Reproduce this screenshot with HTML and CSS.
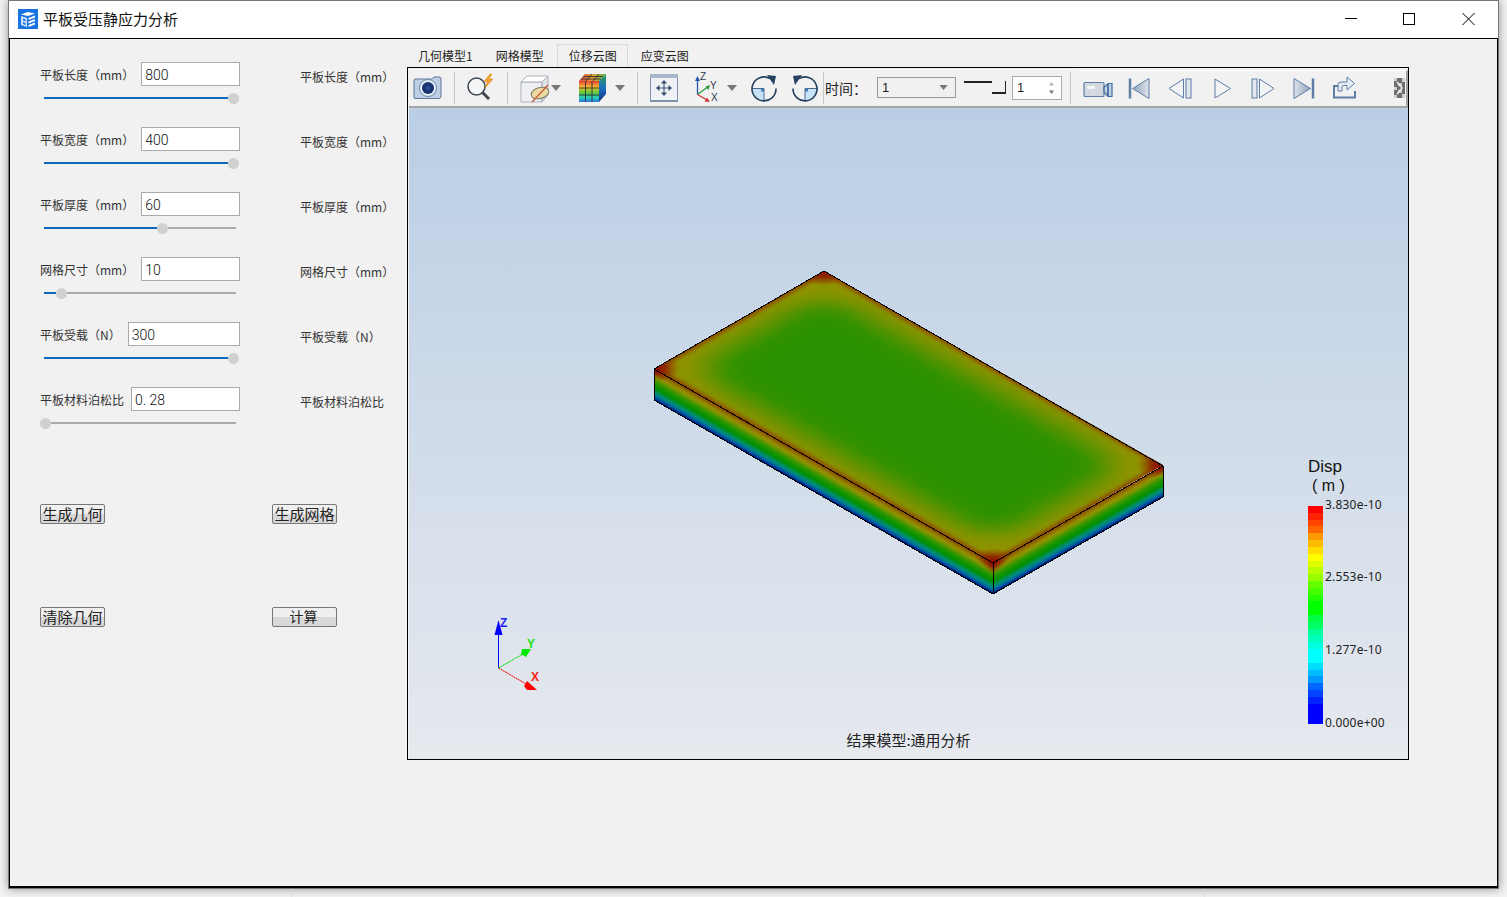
FILE: index.html
```html
<!DOCTYPE html>
<html lang="zh-CN">
<head>
  <meta charset="UTF-8">
  <title>平板受压静应力分析</title>
  <link rel="stylesheet" href="styles.css">
</head>
<body>
  <div class="window">
    <div class="titlebar">
      <svg class="app-icon" width="20" height="20" viewBox="0 0 20 20">
        <rect width="20" height="20" fill="#1a73e3"/>
        <path d="M3 5.500 9.500 3 17 4.500 10 7Z" fill="#fff"/>
        <path d="M3 7v9l6 2V9Z" fill="#cfe2fb"/>
        <path d="M10.500 9 17 6.500v2L10.500 11ZM10.500 12.500 17 10v2l-6.500 2.500ZM10.500 16 17 13.500v2L10.500 18Z" fill="#fff"/>
        <path d="M5 9.500 7.500 10.500v2L5 11.500ZM5 13l2.500 1v2L5 15Z" fill="#1a73e3"/>
      </svg>
      <span class="title">平板受压静应力分析</span>
      <div class="winctl">
        <svg width="58" height="37" viewBox="0 0 58 37"><path d="M21 17.500h12" stroke="#000" fill="none"/></svg>
        <svg width="58" height="37" viewBox="0 0 58 37"><rect x="21.500" y="12.500" width="11" height="11" stroke="#000" fill="none"/></svg>
        <svg width="58" height="37" viewBox="0 0 58 37"><path d="M22.500 12l12 12M34.500 12l-12 12" stroke="#000" fill="none"/></svg>
      </div>
    </div>

    <div class="client">
      <div class="form">
        <div class="param">
          <div class="field">
            <div class="input-row"><label>平板长度（mm）</label><div class="input">800</div></div>
            <div class="slider"><i class="fill" style="width:184px"></i><i class="thumb"></i></div>
          </div>
          <div class="echo">平板长度（mm）</div>
        </div>
        <div class="param">
          <div class="field">
            <div class="input-row"><label>平板宽度（mm）</label><div class="input">400</div></div>
            <div class="slider"><i class="fill" style="width:184px"></i><i class="thumb"></i></div>
          </div>
          <div class="echo">平板宽度（mm）</div>
        </div>
        <div class="param">
          <div class="field">
            <div class="input-row"><label>平板厚度（mm）</label><div class="input">60</div></div>
            <div class="slider"><i class="fill" style="width:113px"></i><i class="thumb"></i><i class="rest"></i></div>
          </div>
          <div class="echo">平板厚度（mm）</div>
        </div>
        <div class="param">
          <div class="field">
            <div class="input-row"><label>网格尺寸（mm）</label><div class="input">10</div></div>
            <div class="slider"><i class="fill" style="width:12px"></i><i class="thumb"></i><i class="rest"></i></div>
          </div>
          <div class="echo">网格尺寸（mm）</div>
        </div>
        <div class="param">
          <div class="field">
            <div class="input-row"><label>平板受载（N）</label><div class="input">300</div></div>
            <div class="slider"><i class="fill" style="width:184px"></i><i class="thumb"></i></div>
          </div>
          <div class="echo">平板受载（N）</div>
        </div>
        <div class="param">
          <div class="field">
            <div class="input-row"><label>平板材料泊松比</label><div class="input">0. 28</div></div>
            <div class="slider"><i class="thumb"></i><i class="rest"></i></div>
          </div>
          <div class="echo">平板材料泊松比</div>
        </div>

        <div class="actions">
          <button>生成几何</button>
          <button>生成网格</button>
          <button>清除几何</button>
          <button class="btn-calc">计算</button>
        </div>
      </div>

      <div class="result">
        <div class="tabs">
          <div class="tab tab-first">几何模型1</div>
          <div class="tab">网格模型</div>
          <div class="tab active">位移云图</div>
          <div class="tab">应变云图</div>
        </div>

        <div class="frame">
          <div class="toolbar">
            <!-- camera -->
            <svg class="tool m4" viewBox="0 0 30 32">
              <path d="M2 7h17l2-2h6l1 2v18l-1.500 1.500h-25L1 25V8Z" fill="#bccde4" stroke="#5f7898"/>
              <circle cx="15" cy="16" r="8.500" fill="#e6edf6" stroke="#6d86a8"/>
              <circle cx="15" cy="16" r="6" fill="#18336f"/>
              <circle cx="15" cy="16" r="2.500" fill="#27488f"/>
            </svg>
            <i class="sep m11"></i>
            <!-- probe -->
            <svg class="tool m11" viewBox="0 0 30 32">
              <circle cx="10.500" cy="14.500" r="8.500" fill="#f4f6f8" stroke="#3d4650" stroke-width="1.500"/>
              <path d="M16.500 20.500 23 27" stroke="#3d4650" stroke-width="3"/>
              <path d="M24 2l-6 7.500h3.500l-2.500 6.500 8-9h-4l3-5Z" fill="#f3a431" stroke="#d47f12" stroke-width=".5"/>
            </svg>
            <i class="sep m11"></i>
            <!-- clip box -->
            <svg class="tool m12" viewBox="0 0 30 32">
              <path d="M1 10h21v20H1Z" fill="#f0f0f2" stroke="#a9b1bd"/>
              <path d="M1 10 7 4h21l-6 6Z" fill="#fff" stroke="#a9b1bd"/>
              <path d="M22 10l6-6v19l-6 7Z" fill="#dfe2e8" stroke="#a9b1bd"/>
              <ellipse cx="20" cy="21" rx="9" ry="5.500" transform="rotate(-15 20 21)" fill="#ecd9a2" stroke="#7f7a66"/>
              <path d="M12 30 28 13" stroke="#c9572f" stroke-width="1.200"/>
            </svg>
            <svg class="arrow m1" viewBox="0 0 10 6"><path d="M0 0h10L5 6Z"/></svg>
            <!-- colour cube -->
            <svg class="tool m16" viewBox="0 0 30 32">
              <defs>
                <linearGradient id="cubeFront" x1="0" y1="0" x2="0" y2="1">
                  <stop offset="0" stop-color="#e8403a"/><stop offset=".3" stop-color="#f4c02c"/>
                  <stop offset=".55" stop-color="#5fc93c"/><stop offset=".8" stop-color="#25c9c0"/><stop offset="1" stop-color="#2a76d8"/>
                </linearGradient>
                <linearGradient id="cubeSide" x1="0" y1="0" x2="0" y2="1">
                  <stop offset="0" stop-color="#2f9f52"/><stop offset=".5" stop-color="#1c6fc0"/><stop offset="1" stop-color="#12307f"/>
                </linearGradient>
                <linearGradient id="cubeTop" x1="0" y1="0" x2="1" y2="0">
                  <stop offset="0" stop-color="#d8483f"/><stop offset=".5" stop-color="#e6a336"/><stop offset="1" stop-color="#58b948"/>
                </linearGradient>
              </defs>
              <path d="M2 9h20v21H2Z" fill="url(#cubeFront)"/>
              <path d="M2 9l6-7h21l-7 7Z" fill="url(#cubeTop)"/>
              <path d="M22 9l7-7v20l-7 8Z" fill="url(#cubeSide)"/>
              <path d="M2 16h20M2 23h20M8.500 9v21M15 9v21M4 7h20M6 4.500h20M9 9l6-7M16 9l6-7" stroke="#223" stroke-width=".8" fill="none"/>
            </svg>
            <svg class="arrow m8" viewBox="0 0 10 6"><path d="M0 0h10L5 6Z"/></svg>
            <i class="sep m12"></i>
            <!-- fit view -->
            <svg class="tool m11" viewBox="0 0 30 32">
              <rect x="1.500" y="2.500" width="27" height="27" fill="#eef1f5" stroke="#8092ad"/>
              <rect x="1" y="2" width="28" height="4" fill="#a9b7ca"/>
              <rect x="1" y="28" width="28" height="2" fill="#7f90ab"/>
              <path d="M15 9v14M8 16h14" stroke="#2f4a70" fill="none"/>
              <path d="M15 8l3 3.500h-6ZM15 24l3-3.500h-6ZM7 16l3.500-3v6ZM23 16l-3.500-3v6Z" fill="#2f4a70"/>
            </svg>
            <!-- view axes -->
            <svg class="tool m13" viewBox="0 0 30 32">
              <path d="M5.500 22.500V7" stroke="#2456b5" stroke-width="1.300"/>
              <path d="M5.500 4 8 9H3Z" fill="#2456b5"/>
              <path d="M5.500 22.500 15 15.500" stroke="#2a9a3d" stroke-width="1.300"/>
              <path d="M18 13l-1.500 5-3-3.500Z" fill="#2a9a3d"/>
              <path d="M5.500 22.500 15 28" stroke="#d5333a" stroke-width="1.300"/>
              <path d="M18 30l-5.500-.5 2.500-4Z" fill="#d5333a"/>
              <text class="axis-mini" x="8" y="8">Z</text>
              <text class="axis-mini" x="18" y="17">Y</text>
              <text class="axis-mini" x="19" y="29">X</text>
            </svg>
            <svg class="arrow m5" viewBox="0 0 10 6"><path d="M0 0h10L5 6Z"/></svg>
            <!-- rotate cw -->
            <svg class="tool m12" viewBox="0 0 30 32">
              <path d="M15 16.500H3.500A11.500 11.500 0 0 0 15 28Z" fill="#c5e2f6"/>
              <rect x="12" y="16.500" width="3" height="3" fill="#3b83c9"/>
              <path d="M15 16.500v12M3 16.500h12" stroke="#4d6a8e" fill="none"/>
              <path d="M21 6.500A12 12 0 1 0 27 16.500" fill="none" stroke="#24405f" stroke-width="1.600"/>
              <path d="M18 3l9 1-2 9Z" fill="#24405f"/>
            </svg>
            <!-- rotate ccw -->
            <svg class="tool m11" viewBox="0 0 30 32">
              <path d="M15 16.500h11.500A11.500 11.500 0 0 1 15 28Z" fill="#c5e2f6"/>
              <rect x="15" y="16.500" width="3" height="3" fill="#3b83c9"/>
              <path d="M15 16.500v12M27 16.500H15" stroke="#4d6a8e" fill="none"/>
              <path d="M9 6.500A12 12 0 1 1 3 16.500" fill="none" stroke="#24405f" stroke-width="1.600"/>
              <path d="M12 3 3 4l2 9Z" fill="#24405f"/>
            </svg>
            <i class="sep m3"></i>
            <span class="time-label">时间：</span>
            <div class="combo"><span>1</span><svg class="combo-arrow" viewBox="0 0 10 6"><path d="M0 0h10L5 6Z"/></svg></div>
            <div class="tslider"><i class="tslider-line"></i><i class="tslider-thumb"></i></div>
            <div class="spin"><span>1</span>
              <svg class="spin-arrows" viewBox="0 0 7 14"><path d="M3.500 1 6 4.500H1Z" fill="#b5b5b5"/><path d="M3.500 13 6 9.500H1Z" fill="#777"/></svg>
            </div>
            <i class="sep m8"></i>
            <div class="player">
              <!-- record -->
              <svg class="pl" width="30" height="32" viewBox="0 0 30 32">
                <rect x="1" y="10.500" width="20" height="14" rx="1" fill="#d3d8e0" stroke="#5e7ea5" stroke-width="1.200"/>
                <rect x="4" y="14" width="8" height="3" fill="#f5f6f8"/>
                <path d="M21 15.500 25 11.500h4v13h-4L21 20Z" fill="#bfd0e4" stroke="#3f6da1" stroke-width="1.200"/>
                <path d="M25 12v12" stroke="#2f5d96" stroke-width="1.500"/>
              </svg>
              <!-- first -->
              <svg class="pl pl-15" width="22" height="32" viewBox="0 0 22 32">
                <defs>
                  <linearGradient id="plFill" x1="0" y1="0" x2="1" y2="0">
                    <stop offset="0" stop-color="#8ea1ba"/><stop offset="1" stop-color="#dfe4ea"/>
                  </linearGradient>
                  <linearGradient id="plFillR" x1="0" y1="0" x2="1" y2="0">
                    <stop offset="0" stop-color="#dfe4ea"/><stop offset="1" stop-color="#8ea1ba"/>
                  </linearGradient>
                </defs>
                <path d="M2 6.500v20" stroke="#5e7ea5" stroke-width="2.500"/>
                <path d="M21 6.500v20L4.500 16.500Z" fill="url(#plFill)" stroke="#5e7ea5"/>
              </svg>
              <!-- previous -->
              <svg class="pl pl-18" width="24" height="32" viewBox="0 0 24 32">
                <path d="M15.500 7v19L1 16.500Z" fill="#f2f3f5" stroke="#5e7ea5"/>
                <rect x="18" y="7" width="5" height="19" fill="#e3e7ec" stroke="#5e7ea5"/>
              </svg>
              <!-- play -->
              <svg class="pl pl-22" width="18" height="32" viewBox="0 0 18 32">
                <path d="M1 7v19l15.500-9.500Z" fill="#f2f3f5" stroke="#5e7ea5"/>
              </svg>
              <!-- next -->
              <svg class="pl pl-19" width="24" height="32" viewBox="0 0 24 32">
                <rect x="1" y="7" width="5" height="19" fill="#e3e7ec" stroke="#5e7ea5"/>
                <path d="M8.500 7v19L23 16.500Z" fill="#f2f3f5" stroke="#5e7ea5"/>
              </svg>
              <!-- last -->
              <svg class="pl pl-18" width="22" height="32" viewBox="0 0 22 32">
                <path d="M1 6.500v20l16.500-10Z" fill="url(#plFillR)" stroke="#5e7ea5"/>
                <path d="M20 6.500v20" stroke="#5e7ea5" stroke-width="2.500"/>
              </svg>
              <!-- export -->
              <svg class="pl pl-17" width="25" height="32" viewBox="0 0 25 32">
                <path d="M6 14H2v11.500h21V19" fill="none" stroke="#5e7ea5" stroke-width="2"/>
                <path d="M6 19v-6.500Q6 10 9 10h6V5l7.500 6.500L15 18v-4.500h-3q-2 0-2 2V19Z" fill="#e6ebf1" stroke="#5e7ea5"/>
              </svg>
              <!-- overflow -->
              <svg class="pl-more" width="11" height="20" viewBox="0 0 11 20">
                <rect width="11" height="20" fill="#6f6f6f"/>
                <path d="M0 0h3v3H0ZM8 0h3v4H8ZM4 5h4v3H4ZM0 9h3v3H0ZM4 12h4v3H4ZM8 16h3v4H8ZM0 17h3v3H0Z" fill="#cfcfcf"/>
                <path d="M3 4l5 6-5 6" stroke="#eee" stroke-width="1.500" fill="none"/>
              </svg>
            </div>
          </div>

          <div class="canvas">
            <svg class="scene" width="999" height="651" viewBox="410 108 999 651">
              <defs>
                <filter id="blurWide" x="-30%" y="-30%" width="160%" height="160%"><feGaussianBlur stdDeviation="7"/></filter>
                <filter id="blurEdge" x="-10%" y="-10%" width="120%" height="120%"><feGaussianBlur stdDeviation="1.200"/></filter>
                <radialGradient id="hot">
                  <stop offset="0" stop-color="#920400"/>
                  <stop offset=".45" stop-color="#8e2000" stop-opacity=".85"/>
                  <stop offset="1" stop-color="#8c4000" stop-opacity="0"/>
                </radialGradient>
                <linearGradient id="sideBands" x1="0" y1="0" x2="0" y2="1">
                  <stop offset="0" stop-color="#8c4000"/>
                  <stop offset=".12" stop-color="#8f7800"/>
                  <stop offset=".22" stop-color="#939300"/>
                  <stop offset=".42" stop-color="#2c9600"/>
                  <stop offset=".6" stop-color="#009000"/>
                  <stop offset=".78" stop-color="#008c84"/>
                  <stop offset=".9" stop-color="#0058a0"/>
                  <stop offset="1" stop-color="#000a80"/>
                </linearGradient>
                <clipPath id="topClip"><rect width="100" height="200"/></clipPath>
                <clipPath id="leftClip"><rect width="200" height="31"/></clipPath>
                <clipPath id="rightClip"><rect width="100" height="31"/></clipPath>
              </defs>

              <!-- top face -->
              <g transform="matrix(1.7,-.98,1.695,.97,655,369)">
                <g clip-path="url(#topClip)">
                  <rect width="100" height="200" fill="#939300"/>
                  <rect x="11" y="11" width="78" height="178" rx="16" fill="#2a9200" filter="url(#blurWide)"/>
                  <rect width="100" height="200" fill="none" stroke="#8c4800" stroke-width="3.500" filter="url(#blurEdge)"/>
                  <circle cx="0" cy="0" r="11" fill="url(#hot)"/>
                  <circle cx="100" cy="0" r="11" fill="url(#hot)"/>
                  <circle cx="0" cy="200" r="11" fill="url(#hot)"/>
                  <circle cx="100" cy="200" r="11" fill="url(#hot)"/>
                </g>
              </g>
              <!-- side faces -->
              <g transform="matrix(1.695,.97,0,1,655,369)">
                <rect width="200" height="31" fill="url(#sideBands)"/>
                <g clip-path="url(#leftClip)">
                  <circle cx="0" cy="0" r="9" fill="url(#hot)"/>
                  <circle cx="200" cy="0" r="11" fill="url(#hot)"/>
                </g>
              </g>
              <g transform="matrix(1.7,-.97,0,1,994,563)">
                <rect width="100" height="31" fill="url(#sideBands)"/>
                <g clip-path="url(#rightClip)">
                  <circle cx="0" cy="0" r="11" fill="url(#hot)"/>
                  <circle cx="100" cy="0" r="9" fill="url(#hot)"/>
                </g>
              </g>
              <!-- edges -->
              <g class="edges">
                <path d="M655 369 825 271 1164 466 994 563Z"/>
                <path d="M655 369v31l339 194 170-97v-31M994 563v31"/>
              </g>

              <!-- triad -->
              <g transform="translate(1 0)">
                <path d="M498.500 668V632" stroke="#0000ff" fill="none"/>
                <path d="M498.500 620l4 15h-8Z" fill="#0000ff"/>
                <path d="M498.500 668 523 654" stroke="#00e000" stroke-dasharray="2 .5" fill="none"/>
                <path d="M531 649l-5 8-5-3 1-5Z" fill="#00e800"/>
                <path d="M498.500 668 526 684" stroke="#ff0000" stroke-dasharray="2 .5" fill="none"/>
                <path d="M527 681l10 9h-10l-3-4Z" fill="#ff0000"/>
                <text class="triad triad-z" x="500" y="627">Z</text>
                <text class="triad triad-y" x="527" y="648">Y</text>
                <text class="triad triad-x" x="531" y="681">X</text>
              </g>
            </svg>

            <div class="legend-title">Disp</div>
            <div class="legend-unit">( m )</div>
            <div class="legend-bar"></div>
            <div class="legend-val val-1">3.830e-10</div>
            <div class="legend-val val-2">2.553e-10</div>
            <div class="legend-val val-3">1.277e-10</div>
            <div class="legend-val val-4">0.000e+00</div>
            <div class="caption">结果模型:通用分析</div>
          </div>
        </div>
      </div>
    </div>
  </div>
  <div class="desk-strip"><div class="desk-gap"></div></div>
</body>
</html>
```

FILE: styles.css
```css
body {
  margin: 0;
  width: 1507px;
  height: 897px;
  overflow: hidden;
  background-color: #f3f3f3;
  font-family: "Noto Sans CJK SC", sans-serif;
  color: #222;
}
svg {
  display: block;
  flex: none;
}

/* window */
.window {
  margin-left: 8px;
  width: 1491px;
  height: 889px;
  box-sizing: border-box;
  border: 1px solid #777;
  display: flex;
  flex-direction: column;
  box-shadow: 0 0 9px rgba(0, 0, 0, 0.4);
}
.desk-strip {
  height: 8px;
  padding-left: 291px;
}
.desk-gap {
  width: 912px;
  height: 8px;
  border-left: 1px solid #ddd;
  border-right: 1px solid #ddd;
}
.titlebar {
  height: 37px;
  flex: none;
  box-sizing: border-box;
  background-color: #fff;
  display: flex;
  align-items: center;
  padding-left: 9px;
}
.title {
  margin: -2px 0 0 5px;
  font-size: 15px;
  color: #111;
}
.app-icon {
  margin-top: -1px;
}
.winctl {
  margin-left: auto;
  display: flex;
}
.client {
  flex: 1;
  display: flex;
  border: 1px solid #000;
  border-bottom-width: 2px;
  background-color: #f1f1f1;
}

/* left form */
.form {
  width: 397px;
  flex: none;
  box-sizing: border-box;
  padding: 23px 0 0 30px;
}
.param {
  height: 65px;
  display: flex;
}
.field {
  width: 200px;
}
.input-row {
  display: flex;
  align-items: center;
  height: 24px;
  gap: 7px;
}
.input-row label {
  font-size: 12px;
  white-space: nowrap;
  color: #333;
}
.input {
  flex: 1;
  height: 24px;
  box-sizing: border-box;
  border: 1px solid #aaa;
  background-color: #fff;
  padding-left: 3px;
  font-family: Roboto, "Liberation Sans", sans-serif;
  font-weight: 300;
  font-size: 14px;
  line-height: 24px;
  color: #111;
}
.slider {
  display: flex;
  align-items: center;
  height: 10px;
  margin-top: 7px;
  width: 199px;
}
.slider .fill {
  height: 2px;
  margin-left: 4px;
  background-color: #0f67bd;
}
.slider .thumb {
  width: 11px;
  height: 11px;
  flex: none;
  border-radius: 50%;
  background-color: #d0d0d0;
}
.slider .rest {
  flex: 1;
  height: 2px;
  margin-right: 3px;
  background-color: #aaa;
}
.echo {
  margin: 5px 0 0 60px;
  font-size: 12px;
  line-height: 20px;
  height: 20px;
  white-space: nowrap;
  color: #333;
}
.actions {
  display: grid;
  grid-template-columns: 65px 65px;
  column-gap: 167px;
  row-gap: 83px;
  margin-top: 52px;
}
button {
  width: 65px;
  height: 20px;
  padding: 0 0 1px;
  border: 1px solid #777;
  border-radius: 2px;
  background: linear-gradient(#efefef 50%, #d8d8d8 50%);
  font-family: "Noto Sans CJK SC", sans-serif;
  font-size: 15px;
  line-height: 17px;
  color: #222;
}
.btn-calc {
  font-size: 14px;
  padding-right: 2px;
}

/* tabs and frame */
.result {
  width: 1002px;
  flex: none;
  padding-top: 5px;
}
.tabs {
  display: flex;
  height: 23px;
  padding-left: 1px;
}
.tab {
  font-size: 12px;
  line-height: 23px;
  padding: 0 13px 0 12px;
  white-space: nowrap;
  color: #222;
}
.tab-first {
  padding: 0 11px 0 10px;
}
.tab.active {
  box-sizing: border-box;
  border: 1px solid #d9d9d9;
  border-bottom: none;
  padding: 0 10px 0 11px;
  line-height: 22px;
}
.tab.active + .tab {
  padding-left: 13px;
}
.frame {
  height: 693px;
  box-sizing: border-box;
  border: 1px solid #000;
  display: flex;
  flex-direction: column;
}

/* toolbar */
.toolbar {
  height: 40px;
  flex: none;
  box-sizing: border-box;
  padding-top: 1px;
  display: flex;
  align-items: center;
  border-bottom: 2px solid #a5a5a5;
  margin-left: 1px;
}
.tool {
  width: 30px;
  height: 32px;
}
.arrow {
  width: 10px;
  height: 6px;
  fill: #777;
}
.sep {
  width: 1px;
  height: 32px;
  flex: none;
  background-color: #c6c6c6;
}
.m1 { margin-left: 1px; }
.m3 { margin-left: 3px; }
.m4 { margin-left: 4px; }
.m5 { margin-left: 5px; }
.m8 { margin-left: 8px; }
.m11 { margin-left: 11px; }
.m12 { margin-left: 12px; }
.m13 { margin-left: 13px; }
.m16 { margin-left: 16px; }
.axis-mini {
  font-family: "Liberation Sans", sans-serif;
  font-size: 10px;
  fill: #2c3a4c;
}
.time-label {
  width: 52px;
  margin-left: 1px;
  flex: none;
  font-size: 14px;
  white-space: nowrap;
  color: #222;
}
.combo {
  width: 79px;
  height: 21px;
  flex: none;
  box-sizing: border-box;
  border: 1px solid #999;
  background-color: #f0f0f0;
  display: flex;
  align-items: center;
  justify-content: space-between;
  padding: 0 7px 0 4px;
  font-family: "Liberation Sans", sans-serif;
  font-size: 13px;
}
.combo-arrow {
  width: 9px;
  height: 5px;
  fill: #777;
}
.tslider {
  width: 42px;
  height: 13px;
  margin-left: 8px;
  flex: none;
  display: flex;
}
.tslider-line {
  width: 28px;
  height: 2px;
  background-color: #222;
}
.tslider-thumb {
  width: 14px;
  height: 13px;
  box-sizing: border-box;
  border-right: 1px solid #222;
  border-bottom: 2px solid #222;
}
.spin {
  width: 50px;
  height: 24px;
  margin-left: 6px;
  flex: none;
  box-sizing: border-box;
  border: 1px solid #aaa;
  background-color: #fff;
  display: flex;
  align-items: center;
  justify-content: space-between;
  padding: 0 6px 0 4px;
  font-family: "Liberation Sans", sans-serif;
  font-size: 13px;
}
.spin-arrows {
  width: 7px;
  height: 14px;
}
.player {
  flex: 1;
  height: 37px;
  margin-left: 8px;
  box-sizing: border-box;
  border-top: 1px solid #fff;
  border-right: 2px solid #a5a5a5;
  margin-top: 1px;
  display: flex;
  align-items: center;
  padding: 0 0 2px 4px;
}
.pl-15 { margin-left: 15px; }
.pl-17 { margin-left: 17px; }
.pl-18 { margin-left: 18px; }
.pl-19 { margin-left: 19px; }
.pl-22 { margin-left: 22px; }
.pl-more {
  margin-left: auto;
  margin-right: 1px;
}

/* 3d canvas */
.canvas {
  flex: 1;
  position: relative;
  margin-left: 1px;
  background: linear-gradient(#bacee5, #e6e9ee);
}
.scene {
  position: absolute;
  left: 0;
  top: 0;
}
.edges path {
  fill: none;
  stroke: #000;
  stroke-width: 1;
  shape-rendering: crispEdges;
}
.triad {
  font-family: "Liberation Sans", sans-serif;
  font-size: 12px;
  font-weight: bold;
}
.triad-z { fill: #2020ff; }
.triad-y { fill: #20e020; }
.triad-x { fill: #ff2020; }
.legend-title {
  position: absolute;
  left: 899px;
  top: 349px;
  font-family: "Liberation Sans", sans-serif;
  font-size: 17px;
  line-height: 20px;
  color: #111;
}
.legend-unit {
  position: absolute;
  left: 903px;
  top: 370px;
  font-family: "Liberation Sans", sans-serif;
  font-size: 16px;
  line-height: 16px;
  white-space: nowrap;
  color: #111;
}
.legend-bar {
  position: absolute;
  left: 899px;
  top: 398px;
  width: 15px;
  height: 218px;
  background: linear-gradient(
    #f00 0 3.125%, #f20 0 6.25%, #f40 0 9.375%, #f60 0 12.5%, #f90 0 15.625%, #fb0 0 18.75%, #fd0 0 21.875%, #ff0 0 25%,
    #df0 0 28.125%, #bf0 0 31.25%, #9f0 0 34.375%, #6f0 0 37.5%, #4f0 0 40.625%, #2f0 0 43.75%, #0f0 0 50%,
    #0f4 0 53.125%, #0f6 0 56.25%, #0f9 0 59.375%, #0fb 0 62.5%, #0fd 0 65.625%, #0ff 0 71.875%,
    #0df 0 75%, #0bf 0 78.125%, #09f 0 81.25%, #06f 0 84.375%, #04f 0 87.5%, #02f 0 90.625%, #00f 0 100%
  );
}
.legend-val {
  position: absolute;
  left: 916px;
  font-family: "Noto Sans", sans-serif;
  font-size: 12px;
  line-height: 14px;
  letter-spacing: 0.2px;
  color: #222;
}
.val-1 { top: 390px; }
.val-2 { top: 462px; }
.val-3 { top: 535px; }
.val-4 { top: 608px; }
.caption {
  position: absolute;
  left: 0;
  right: 0;
  bottom: 9px;
  text-align: center;
  font-size: 15px;
  line-height: 20px;
  color: #222;
}
```
